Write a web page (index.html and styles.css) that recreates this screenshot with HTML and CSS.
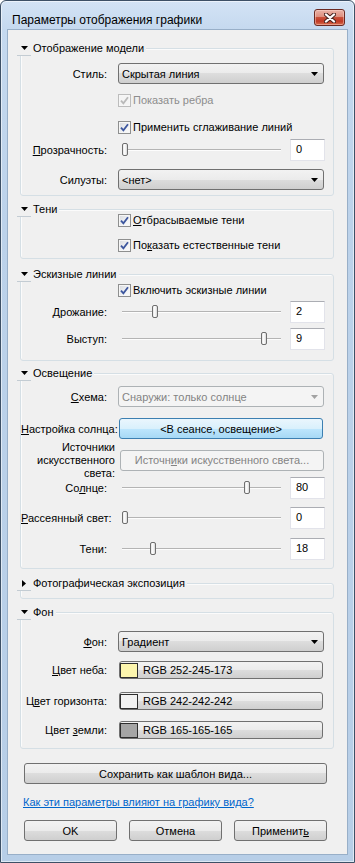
FILE: index.html
```html
<!DOCTYPE html>
<html lang="ru">
<head>
<meta charset="utf-8">
<title>Параметры отображения графики</title>
<link rel="stylesheet" href="styles.css">
</head>
<body>
<div class="window">
  <div class="titlebar">
    <span class="title">Параметры отображения графики</span>
    <div class="close">
      <svg width="12" height="10" viewBox="0 0 12 10"><path d="M2 1.5 L10 8.5 M10 1.5 L2 8.5" stroke="#4a2520" stroke-width="4.2" stroke-linecap="round" fill="none"/><path d="M2 1.5 L10 8.5 M10 1.5 L2 8.5" stroke="#fff" stroke-width="2.3" stroke-linecap="round" fill="none"/></svg>
    </div>
  </div>
  <div class="client">

    <div class="group g-model">
      <div class="ghead"><span class="toggle"><svg width="7" height="4" viewBox="0 0 7 4"><polygon points="0,0 7,0 3.5,4" fill="#000"/></svg></span><span class="gtitle">Отображение модели</span></div>
      <div class="row mt7">
        <span class="lbl">Стиль:</span>
        <div class="combo"><span>Скрытая линия</span><svg width="7" height="4" viewBox="0 0 7 4"><polygon points="0,0 7,0 3.5,4" fill="#000"/></svg></div>
      </div>
      <div class="row cbrow mt10 disabled">
        <span class="cb"><svg width="9" height="9" viewBox="0 0 9 9"><path d="M1 4.6 L3.4 7.4 L8 1.2" fill="none" stroke="#b9b9b9" stroke-width="1.8"/></svg></span>
        <span class="cbtext">Показать ребра</span>
      </div>
      <div class="row cbrow mt14">
        <span class="cb"><svg width="9" height="9" viewBox="0 0 9 9"><path d="M1 4.6 L3.4 7.4 L8 1.2" fill="none" stroke="#3c569e" stroke-width="1.8"/></svg></span>
        <span class="cbtext">Применить сглаживание линий</span>
      </div>
      <div class="row mt5">
        <span class="lbl"><u>П</u>розрачность:</span>
        <div class="slider"><span class="thumb" style="left:4px"></span></div>
        <div class="num">0</div>
      </div>
      <div class="row mt8">
        <span class="lbl">Силуэты:</span>
        <div class="combo"><span>&lt;нет&gt;</span><svg width="7" height="4" viewBox="0 0 7 4"><polygon points="0,0 7,0 3.5,4" fill="#000"/></svg></div>
      </div>
    </div>

    <div class="group g-shadows">
      <div class="ghead"><span class="toggle"><svg width="7" height="4" viewBox="0 0 7 4"><polygon points="0,0 7,0 3.5,4" fill="#000"/></svg></span><span class="gtitle">Тени</span></div>
      <div class="row cbrow mtm3">
        <span class="cb"><svg width="9" height="9" viewBox="0 0 9 9"><path d="M1 4.6 L3.4 7.4 L8 1.2" fill="none" stroke="#3c569e" stroke-width="1.8"/></svg></span>
        <span class="cbtext"><u>О</u>тбрасываемые тени</span>
      </div>
      <div class="row cbrow mt12">
        <span class="cb"><svg width="9" height="9" viewBox="0 0 9 9"><path d="M1 4.6 L3.4 7.4 L8 1.2" fill="none" stroke="#3c569e" stroke-width="1.8"/></svg></span>
        <span class="cbtext">По<u>к</u>азать естественные тени</span>
      </div>
    </div>

    <div class="group g-sketch">
      <div class="ghead"><span class="toggle"><svg width="7" height="4" viewBox="0 0 7 4"><polygon points="0,0 7,0 3.5,4" fill="#000"/></svg></span><span class="gtitle">Эскизные линии</span></div>
      <div class="row cbrow mt2">
        <span class="cb"><svg width="9" height="9" viewBox="0 0 9 9"><path d="M1 4.6 L3.4 7.4 L8 1.2" fill="none" stroke="#3c569e" stroke-width="1.8"/></svg></span>
        <span class="cbtext">Включить эскизные линии</span>
      </div>
      <div class="row mt4">
        <span class="lbl">Дрожание:</span>
        <div class="slider"><span class="thumb" style="left:34px"></span></div>
        <div class="num">2</div>
      </div>
      <div class="row mt5">
        <span class="lbl">Выступ:</span>
        <div class="slider"><span class="thumb" style="left:143px"></span></div>
        <div class="num">9</div>
      </div>
    </div>

    <div class="group g-light">
      <div class="ghead"><span class="toggle"><svg width="7" height="4" viewBox="0 0 7 4"><polygon points="0,0 7,0 3.5,4" fill="#000"/></svg></span><span class="gtitle">Освещение</span></div>
      <div class="row mt5">
        <span class="lbl"><u>С</u>хема:</span>
        <div class="combo disabled"><span>Снаружи: только солнце</span><svg width="7" height="4" viewBox="0 0 7 4"><polygon points="0,0 7,0 3.5,4" fill="#a2a2a2"/></svg></div>
      </div>
      <div class="row mt11">
        <span class="lbl"><u>Н</u>астройка солнца:</span>
        <div class="btn ctl blue">&lt;В сеансе, освещение&gt;</div>
      </div>
      <div class="row art mt3">
        <span class="lbl multi">Источники искусственного света:</span>
        <div class="btn ctl off">Источн<u>и</u>ки искусственного света...</div>
      </div>
      <div class="row mtm1">
        <span class="lbl">Со<u>л</u>нце:</span>
        <div class="slider"><span class="thumb" style="left:126px"></span></div>
        <div class="num">80</div>
      </div>
      <div class="row mt8">
        <span class="lbl"><u>Р</u>ассеянный свет:</span>
        <div class="slider"><span class="thumb" style="left:4px"></span></div>
        <div class="num">0</div>
      </div>
      <div class="row mt9">
        <span class="lbl">Тени:</span>
        <div class="slider"><span class="thumb" style="left:32px"></span></div>
        <div class="num">18</div>
      </div>
    </div>

    <div class="group g-photo">
      <div class="ghead"><span class="toggle"><svg width="4" height="7" viewBox="0 0 4 7"><polygon points="0,0 4,3.5 0,7" fill="#000"/></svg></span><span class="gtitle">Фотографическая экспозиция</span></div>
    </div>

    <div class="group g-bg">
      <div class="ghead"><span class="toggle"><svg width="7" height="4" viewBox="0 0 7 4"><polygon points="0,0 7,0 3.5,4" fill="#000"/></svg></span><span class="gtitle">Фон</span></div>
      <div class="row mt11">
        <span class="lbl"><u>Ф</u>он:</span>
        <div class="combo"><span>Градиент</span><svg width="7" height="4" viewBox="0 0 7 4"><polygon points="0,0 7,0 3.5,4" fill="#000"/></svg></div>
      </div>
      <div class="row mt9">
        <span class="lbl"><u>Ц</u>вет неба:</span>
        <div class="btn ctl color"><span class="swatch sky"></span>RGB 252-245-173</div>
      </div>
      <div class="row mt13">
        <span class="lbl">Ц<u>в</u>ет горизонта:</span>
        <div class="btn ctl color"><span class="swatch horizon"></span>RGB 242-242-242</div>
      </div>
      <div class="row mt11">
        <span class="lbl">Цвет <u>з</u>емли:</span>
        <div class="btn ctl color"><span class="swatch ground"></span>RGB 165-165-165</div>
      </div>
    </div>

    <div class="btn save">Сохранить как шаблон вида...</div>
    <a class="link" href="#">Как эти параметры влияют на графику вида?</a>
    <div class="btnrow">
      <div class="btn">OK</div>
      <div class="btn">Отмена</div>
      <div class="btn">Применит<u>ь</u></div>
    </div>
  </div>
</div>
</body>
</html>
```

FILE: styles.css
```css
* { box-sizing: border-box; }
html, body { margin: 0; padding: 0; background: #ffffff; }
body {
  font-family: "Liberation Sans", Arial, sans-serif;
  font-size: 11px;
  color: #000;
}
u { text-decoration: underline; text-underline-offset: 1px; }

.window {
  width: 355px;
  height: 863px;
  border: 1px solid #3d5066;
  border-radius: 6px 6px 0 0;
  background: linear-gradient(180deg, #d3e3f5 0px, #c5d9ef 28px, #bcd2ea 220px, #b7cee7 100%);
  box-shadow: inset 0 0 0 1px rgba(255, 255, 255, 0.55);
  padding: 0 6px 7px;
  display: flex;
  flex-direction: column;
}

.titlebar {
  height: 28px;
  flex: none;
  display: flex;
  justify-content: space-between;
  align-items: flex-start;
  padding: 0 3px 0 5px;
}
.title {
  font-size: 12px;
  line-height: 14px;
  margin-top: 12px;
  color: #000;
}
.close {
  width: 31px;
  height: 17px;
  margin-top: 8px;
  border: 1px solid #6b2a22;
  border-radius: 3px;
  background: linear-gradient(180deg, #eab3a7 0%, #de8f7f 45%, #c9503a 50%, #c03a25 75%, #d8704f 100%);
  box-shadow: inset 0 0 0 1px rgba(255, 220, 210, 0.45);
  display: flex;
  align-items: center;
  justify-content: center;
}

.client {
  flex: 1;
  background: #f0f0f0;
  border: 1px solid #98afc8;
  display: flex;
  flex-direction: column;
}

.group {
  margin: 0 13px 0 12px;
  border: 1px solid #d5dfe5;
  border-radius: 3px;
  box-shadow: inset 1px 1px 0 #fbfbfb;
}
.g-model { margin-top: 18px; padding-bottom: 5px; }
.g-shadows { margin-top: 13px; padding-bottom: 6px; }
.g-sketch { margin-top: 15px; padding-bottom: 10px; }
.g-light { margin-top: 12px; padding-bottom: 8px; }
.g-photo { margin-top: 14px; padding-bottom: 7px; }
.g-bg { margin-top: 13px; padding-bottom: 9px; }

.ghead {
  display: flex;
  align-items: flex-start;
  width: max-content;
  height: 15px;
  margin: -8px 0 0 -4px;
  padding-right: 2px;
  background: #f0f0f0;
}
.toggle {
  width: 14px;
  height: 15px;
  border-bottom: 1px solid #c3ccd3;
  display: flex;
  align-items: center;
  justify-content: center;
}
.toggle svg { display: block; }
.gtitle { line-height: 14px; margin-left: 2px; }

.row { display: flex; align-items: center; }
.mtm3 { margin-top: -3px; }
.mtm1 { margin-top: -1px; }
.mt2 { margin-top: 2px; }
.mt3 { margin-top: 3px; }
.mt4 { margin-top: 4px; }
.mt5 { margin-top: 5px; }
.mt7 { margin-top: 7px; }
.mt8 { margin-top: 8px; }
.mt9 { margin-top: 9px; }
.mt10 { margin-top: 10px; }
.mt11 { margin-top: 11px; }
.mt12 { margin-top: 12px; }
.mt13 { margin-top: 13px; }
.mt14 { margin-top: 14px; }

.lbl {
  flex: none;
  width: 86px;
  margin-right: 11px;
  text-align: right;
  white-space: nowrap;
  line-height: 14px;
}
.lbl.multi {
  width: 94px;
  margin-right: 4px;
  white-space: normal;
  line-height: 13px;
}
.row.art { height: 36px; }

.combo {
  width: 206px;
  height: 21px;
  border: 1px solid #707070;
  border-radius: 3px;
  background: linear-gradient(180deg, #f2f2f2 0%, #ebebeb 50%, #dddddd 50%, #cfcfcf 100%);
  display: flex;
  align-items: center;
  justify-content: space-between;
  padding: 0 5px 0 3px;
}
.combo svg { display: block; }
.combo.disabled {
  border-color: #adb2b5;
  background: #f4f4f4;
  color: #838383;
}

.btn {
  height: 21px;
  border: 1px solid #707070;
  border-radius: 3px;
  background: linear-gradient(180deg, #f2f2f2 0%, #ebebeb 50%, #dddddd 50%, #cfcfcf 100%);
  display: flex;
  align-items: center;
  justify-content: center;
  white-space: nowrap;
}
.btn.ctl { width: 204px; margin-left: 1px; }
.btn.blue {
  border-color: #3c7fb1;
  background: linear-gradient(180deg, #eaf6fd 0%, #d9f0fc 50%, #bee6fd 50%, #a7d9f5 100%);
}
.btn.off {
  border-color: #adb2b5;
  background: #f4f4f4;
  color: #838383;
}
.btn.color {
  height: 18px;
  justify-content: flex-start;
}
.swatch {
  width: 18px;
  height: 15px;
  border: 1px solid #2e2e2e;
  margin-right: 5px;
  flex: none;
}
.swatch.sky { background: rgb(252, 245, 173); }
.swatch.horizon { background: rgb(242, 242, 242); }
.swatch.ground { background: rgb(165, 165, 165); }

.cbrow { padding-left: 97px; height: 13px; }
.cb {
  flex: none;
  width: 13px;
  height: 13px;
  border: 1px solid #8e8f8f;
  background: linear-gradient(135deg, #d6d9de 0%, #f2f3f4 60%, #fbfbfb 100%);
  box-shadow: inset 0 0 0 1px #f6f6f6;
  display: flex;
  align-items: center;
  justify-content: center;
}
.cb svg { display: block; }
.cbtext { margin-left: 2px; line-height: 13px; white-space: nowrap; }
.disabled .cb {
  border-color: #bcbcbc;
  background: #f4f4f4;
}
.disabled .cbtext { color: #8d8d8d; }

.slider {
  position: relative;
  flex: none;
  width: 166px;
  height: 22px;
}
.slider::before {
  content: "";
  position: absolute;
  left: 4px;
  right: 3px;
  top: 10px;
  height: 2px;
  background: linear-gradient(180deg, #b4b4b4 50%, #fdfdfd 50%);
}
.thumb {
  position: absolute;
  top: 4px;
  width: 6px;
  height: 13px;
  border: 1px solid #6f6f6f;
  border-radius: 2px;
  background: linear-gradient(90deg, #e6e6e6 0%, #ffffff 45%, #d8d8d8 100%);
}
.num {
  flex: none;
  width: 35px;
  height: 22px;
  margin-left: 6px;
  background: #fff;
  border: 1px solid #e2e3ea;
  border-top-color: #abadb3;
  padding: 0 0 2px 5px;
  display: flex;
  align-items: center;
}

.save {
  width: 303px;
  margin: 14px 0 0 16px;
}
.link {
  align-self: flex-start;
  margin: 11px 0 0 15px;
  line-height: 14px;
  color: #0066cc;
  text-decoration: underline;
}
.btnrow {
  display: flex;
  gap: 12px;
  margin: 11px 0 0 16px;
}
.btnrow .btn { width: 93px; }
```
